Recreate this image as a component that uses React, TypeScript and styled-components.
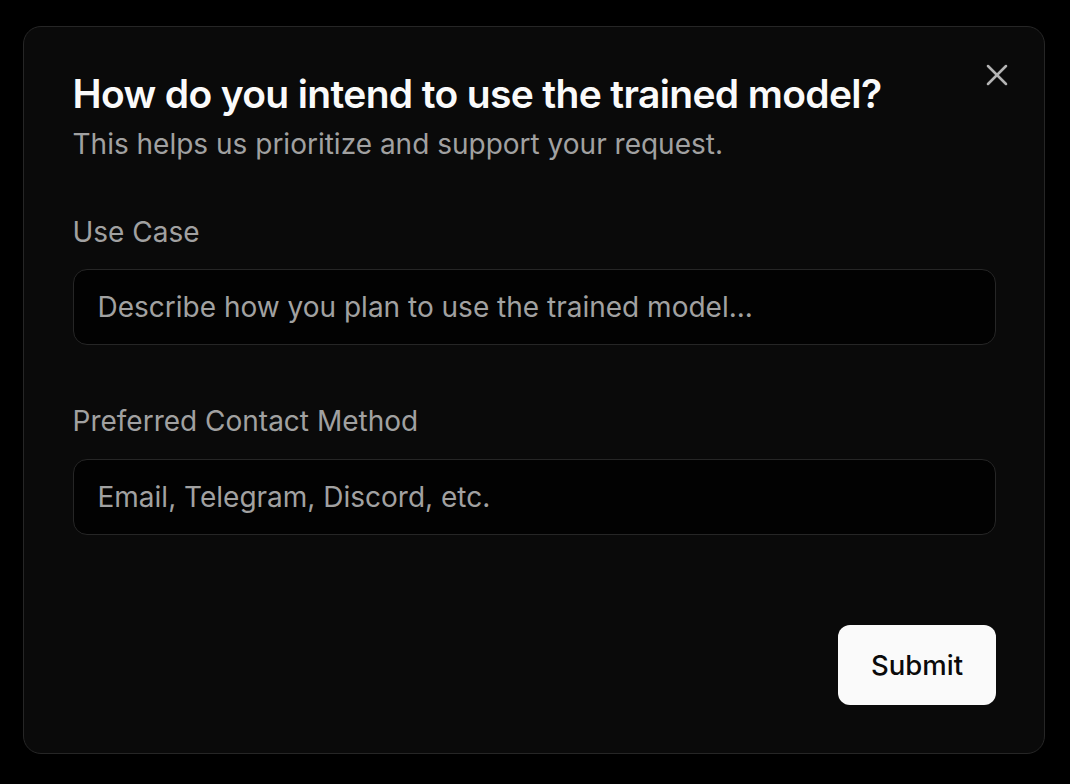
import styled, { createGlobalStyle } from "styled-components";

const GlobalStyle = createGlobalStyle`
  html, body {
    margin: 0;
    background: #000;
  }
  body {
    font-family: Inter, "Noto Sans", sans-serif;
    -webkit-font-smoothing: antialiased;
  }
`;

const Page = styled.div`
  padding: 26px 25px 30px 23px;
  display: flex;
`;

const Dialog = styled.div`
  position: relative;
  box-sizing: border-box;
  width: 1022px;
  height: 728px;
  background: #0a0a0a;
  border: 1.5px solid #262626;
  border-radius: 18px;
  padding: 43px 48px 48px 48.5px;
  display: flex;
  flex-direction: column;
`;

const Header = styled.div`
  display: flex;
  flex-direction: column;
  gap: 11px;
`;

const Title = styled.h2`
  margin: 0;
  color: #fafafa;
  font-size: 39px;
  font-weight: 600;
  letter-spacing: -0.65px;
  line-height: 1.21;
`;

const Subtitle = styled.p`
  margin: 0;
  color: #a1a1a1;
  font-size: 28px;
  line-height: 1.21;
`;

const Field = styled.div<{ $top: number }>`
  display: flex;
  flex-direction: column;
  gap: 20px;
  margin-top: ${(p) => p.$top}px;
`;

const Label = styled.label`
  color: #a1a1a1;
  font-size: 28px;
  line-height: 1.21;
`;

const Input = styled.input`
  box-sizing: border-box;
  height: 76px;
  width: 100%;
  background: #020202;
  border: 1.5px solid #262626;
  border-radius: 14px;
  padding: 0 24px;
  font-family: inherit;
  font-size: 28px;
  color: #fafafa;
  outline: none;
  &::placeholder {
    color: #a1a1a1;
  }
`;

const Footer = styled.div`
  margin-top: auto;
  display: flex;
  justify-content: flex-end;
`;

const SubmitButton = styled.button`
  width: 158px;
  height: 80px;
  border: none;
  border-radius: 12px;
  background: #fafafa;
  color: #0a0a0a;
  font-family: inherit;
  font-size: 27.5px;
  font-weight: 500;
  cursor: pointer;
`;

const CloseButton = styled.button`
  position: absolute;
  top: 29.5px;
  right: 29.5px;
  width: 36px;
  height: 36px;
  padding: 0;
  border: none;
  background: transparent;
  color: #b5b5b5;
  display: flex;
  align-items: center;
  justify-content: center;
  cursor: pointer;
`;

export default function App() {
  return (
    <>
      <GlobalStyle />
      <Page>
        <Dialog>
          <CloseButton aria-label="Close">
            <svg width="36" height="36" viewBox="0 0 24 24" fill="none" stroke="currentColor" strokeWidth="1.7" strokeLinecap="round">
              <path d="M18 6 6 18" />
              <path d="m6 6 12 12" />
            </svg>
          </CloseButton>
          <Header>
            <Title>How do you intend to use the trained model?</Title>
            <Subtitle>This helps us prioritize and support your request.</Subtitle>
          </Header>
          <Field $top={53.5}>
            <Label>Use Case</Label>
            <Input placeholder="Describe how you plan to use the trained model..." />
          </Field>
          <Field $top={60}>
            <Label>Preferred Contact Method</Label>
            <Input placeholder="Email, Telegram, Discord, etc." />
          </Field>
          <Footer>
            <SubmitButton>Submit</SubmitButton>
          </Footer>
        </Dialog>
      </Page>
    </>
  );
}
